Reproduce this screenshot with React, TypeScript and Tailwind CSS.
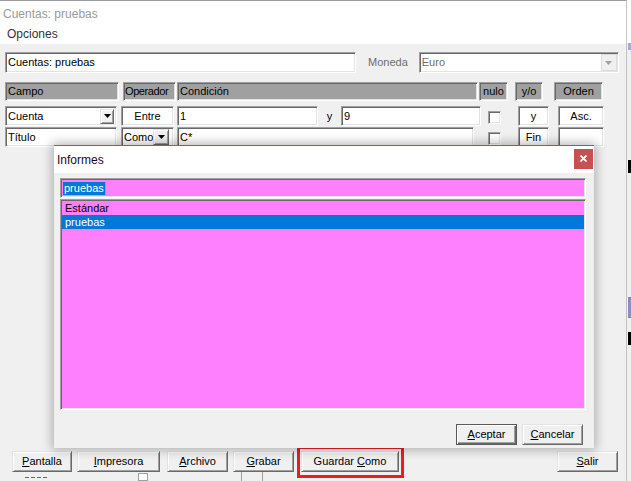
import React from "react";

const sunken =
  "border border-t-[#a0a0a0] border-l-[#a0a0a0] border-b-white border-r-white shadow-[inset_1px_1px_0_#696969,inset_-1px_-1px_0_#e3e3e3]";
const raised =
  "flex items-center justify-center bg-[#f0f0f0] border border-t-[#e3e3e3] border-l-[#e3e3e3] border-b-[#696969] border-r-[#696969] shadow-[inset_1px_1px_0_#ffffff,inset_-1px_-1px_0_#a0a0a0] text-[11px] text-black leading-none";

function Tri({ color = "#000" }: { color?: string }) {
  return (
    <svg width="7" height="4" viewBox="0 0 7 4">
      <path d="M0 0 H7 L3.5 4 Z" fill={color} />
    </svg>
  );
}

function Check() {
  return <div className={`w-[13px] h-[13px] bg-white ${sunken}`} />;
}

function Btn({ w, children, className = "" }: { w: string; children: React.ReactNode; className?: string }) {
  return <div className={`${raised} h-[21px] ${w} ${className}`}>{children}</div>;
}

export default function App() {
  return (
    <div className="w-[631px] h-[481px] overflow-hidden flex bg-[#f0f0f0] font-['Liberation_Sans',Arial,sans-serif] relative">
      {/* Main window */}
      <div className="w-[627px] h-[481px] flex flex-col border-t border-t-[#9c9c9c] border-r border-r-[#c4c4c4] bg-[#f0f0f0]">
        <div className="h-[23px] bg-white flex items-center pl-[3px] pt-[2px] text-[12px] text-[#9a9a9a]">Cuentas: pruebas</div>
        <div className="h-[20px] bg-white flex items-center pl-[7px] text-[12px] text-[#333]">Opciones</div>

        {/* name + moneda */}
        <div className="flex items-center mt-[8px] h-[21px]">
          <div className={`ml-[5px] w-[351px] h-[21px] bg-white ${sunken} flex items-center pl-[2px] text-[11px] text-black`}>Cuentas: pruebas</div>
          <div className="ml-[12px] text-[11px] text-[#6d6d6d]">Moneda</div>
          <div className={`ml-[11px] w-[200px] h-[21px] bg-white ${sunken} flex items-center pl-[2px] pr-[1px] text-[11px] text-[#6d6d6d]`}>
            <span className="flex-1">Euro</span>
            <div className="w-[16px] h-[17px] bg-[#f0f0f0] border border-[#dcdcdc] flex items-center justify-center">
              <Tri color="#a0a0a0" />
            </div>
          </div>
        </div>

        {/* header */}
        <div className="flex mt-[9px] h-[19px] text-[11px] text-black">
          <div className={`ml-[5px] w-[114px] bg-[#a0a0a0] ${sunken} flex items-center pl-[2px]`}>Campo</div>
          <div className={`ml-[4px] w-[53px] bg-[#a0a0a0] ${sunken} flex items-center pl-[1px] overflow-hidden`}>
            <span className="tracking-[-0.4px]">Operador</span>
          </div>
          <div className={`ml-[1px] w-[301px] bg-[#a0a0a0] ${sunken} flex items-center pl-[2px]`}>Condición</div>
          <div className={`ml-[1px] w-[29px] bg-[#a0a0a0] ${sunken} flex items-center justify-center`}>nulo</div>
          <div className={`ml-[7px] w-[28px] bg-[#a0a0a0] ${sunken} flex items-center justify-center`}>y/o</div>
          <div className={`ml-[11px] w-[49px] bg-[#a0a0a0] ${sunken} flex items-center justify-center`}>Orden</div>
        </div>

        {/* row 1 */}
        <div className="flex items-center mt-[5px] h-[20px] text-[11px] text-black">
          <div className={`ml-[5px] w-[112px] h-[20px] bg-white ${sunken} flex items-center pl-[2px] pr-[2px]`}>
            <span className="flex-1">Cuenta</span>
            <div className={`${raised} w-[14px] h-[15px]`}><Tri /></div>
          </div>
          <div className={`ml-[4px] w-[53px] h-[20px] bg-white ${sunken} flex items-center justify-center`}>Entre</div>
          <div className={`ml-[3px] w-[141px] h-[20px] bg-white ${sunken} flex items-center pl-[2px]`}>1</div>
          <div className="w-[23px] text-center">y</div>
          <div className={`w-[140px] h-[20px] bg-white ${sunken} flex items-center pl-[2px]`}>9</div>
          <div className="ml-[7px] mt-[2px]"><Check /></div>
          <div className={`ml-[17px] w-[31px] h-[20px] bg-white ${sunken} flex items-center justify-center`}>y</div>
          <div className={`ml-[9px] w-[46px] h-[20px] bg-white ${sunken} flex items-center justify-center`}>Asc.</div>
        </div>

        {/* row 2 */}
        <div className="flex items-center mt-[1px] h-[20px] text-[11px] text-black">
          <div className={`ml-[5px] w-[112px] h-[20px] bg-white ${sunken} flex items-center pl-[2px]`}>Título</div>
          <div className={`ml-[4px] w-[53px] h-[20px] bg-white ${sunken} flex items-center pl-[2px] pr-[4px]`}>
            <span className="flex-1">Como</span>
            <div className={`${raised} w-[16px] h-[16px]`}><Tri /></div>
          </div>
          <div className={`ml-[3px] w-[297px] h-[20px] bg-white ${sunken} flex items-center pl-[2px]`}>C*</div>
          <div className="ml-[14px] mt-[2px]"><Check /></div>
          <div className={`ml-[17px] w-[31px] h-[20px] bg-white ${sunken} flex items-center justify-center`}>Fin</div>
          <div className={`ml-[9px] w-[46px] h-[20px] bg-white ${sunken}`} />
        </div>

        {/* bottom buttons */}
        <div className="mt-auto flex items-center h-[21px]">
          <Btn w="w-[60px]" className="ml-[12px]"><span><u>P</u>antalla</span></Btn>
          <Btn w="w-[83px]" className="ml-[5px]"><span><u>I</u>mpresora</span></Btn>
          <Btn w="w-[61px]" className="ml-[7px]"><span><u>A</u>rchivo</span></Btn>
          <Btn w="w-[61px]" className="ml-[5px]"><span><u>G</u>rabar</span></Btn>
          <div className="relative ml-[7px]">
            <Btn w="w-[98px]"><span>Guardar <u>C</u>omo</span></Btn>
            <div className="absolute left-[-4px] top-[-5px] w-[107px] h-[32px] border-[3px] border-[#ed1c24]" />
          </div>
          <Btn w="w-[61px]" className="ml-auto mr-[8px]"><span><u>S</u>alir</span></Btn>
        </div>
        <div className="h-[9px] flex">
          <div className="ml-[25px] mt-[5px] w-[22px] h-[2px] flex gap-[2px]">
            <div className="w-[4px] h-[1px] bg-[#666]" />
            <div className="w-[4px] h-[1px] bg-[#666]" />
            <div className="w-[4px] h-[1px] bg-[#666]" />
            <div className="w-[4px] h-[1px] bg-[#666]" />
          </div>
          <div className="ml-[91px] mt-[1px] w-[10px] h-[8px] border border-[#a0a0a0] bg-white" />
          <div className="ml-[93px] w-px h-full bg-[#a0a0a0]" />
          <div className="ml-[20px] w-px h-full bg-[#a0a0a0]" />
        </div>
      </div>

      {/* right strip (other window) */}
      <div className="w-[4px] flex flex-col">
        <div className="h-[43px] bg-white" />
        <div className="h-[7px] bg-[#a8a8d8] ml-[1px]" />
        <div className="h-[110px]" />
        <div className="h-[13px] bg-black ml-[1px]" />
        <div className="h-[124px]" />
        <div className="h-[1px] bg-[#888] ml-[1px]" />
        <div className="h-[19px] bg-[#8c8cc8] ml-[1px]" />
        <div className="h-[1px] bg-[#888] ml-[1px]" />
        <div className="h-[14px]" />
        <div className="h-[13px] bg-black ml-[1px]" />
        <div className="flex-1" />
      </div>

      {/* Informes dialog */}
      <div className="absolute left-[54px] top-[145px] w-[540px] h-[303px] flex flex-col bg-[#f0f0f0] border-t border-t-[#1883d7] shadow-[0_0_10px_2px_rgba(0,0,0,0.28)]">
        <div className="h-[27px] bg-white flex items-center pl-[3px] relative">
          <span className="text-[12px] text-[#1a0a2a]">Informes</span>
          <div className="ml-auto mr-[1px] mb-[2px] w-[19px] h-[20px] bg-[#c75050] flex items-center justify-center">
            <svg width="7" height="7" viewBox="0 0 7 7">
              <path d="M0.5 0.5 L6.5 6.5 M6.5 0.5 L0.5 6.5" stroke="#fff" strokeWidth="1.8" />
            </svg>
          </div>
        </div>
        <div className="ml-[6px] mt-[5px] w-[526px] h-[20px] bg-[#ff80ff] border border-t-[#a0a0a0] border-l-[#a0a0a0] border-b-white border-r-white shadow-[inset_1px_1px_0_#696969,inset_-1px_-1px_0_#e3e3e3] flex items-center pl-[2px]">
          <span className="bg-[#0078d7] text-white text-[11px] leading-[13px] px-[1px] border-r border-r-[#ff8c1a]">pruebas</span>
        </div>
        <div className="ml-[6px] mt-[1px] w-[526px] h-[211px] bg-[#ff80ff] border border-t-[#a0a0a0] border-l-[#a0a0a0] border-b-white border-r-white shadow-[inset_1px_1px_0_#696969,inset_-1px_-1px_0_#e3e3e3] pt-[1px] px-[1px] text-[11px]">
          <div className="h-[14px] flex items-center pl-[3px] text-black">Estándar</div>
          <div className="h-[14px] flex items-center pl-[3px] bg-[#0078d7] text-white">pruebas</div>
        </div>
        <div className="flex justify-end gap-[5px] mt-[14px] pr-[11px]">
          <div className="w-[61px] h-[21px] flex items-center justify-center bg-[#f0f0f0] border border-[#5a5a5a] shadow-[inset_1px_1px_0_#ffffff,inset_-1px_-1px_0_#696969,inset_-2px_-2px_0_#a0a0a0] text-[11px] text-black leading-none">
            <span><u>A</u>ceptar</span>
          </div>
          <Btn w="w-[61px]"><span><u>C</u>ancelar</span></Btn>
        </div>
      </div>
    </div>
  );
}
